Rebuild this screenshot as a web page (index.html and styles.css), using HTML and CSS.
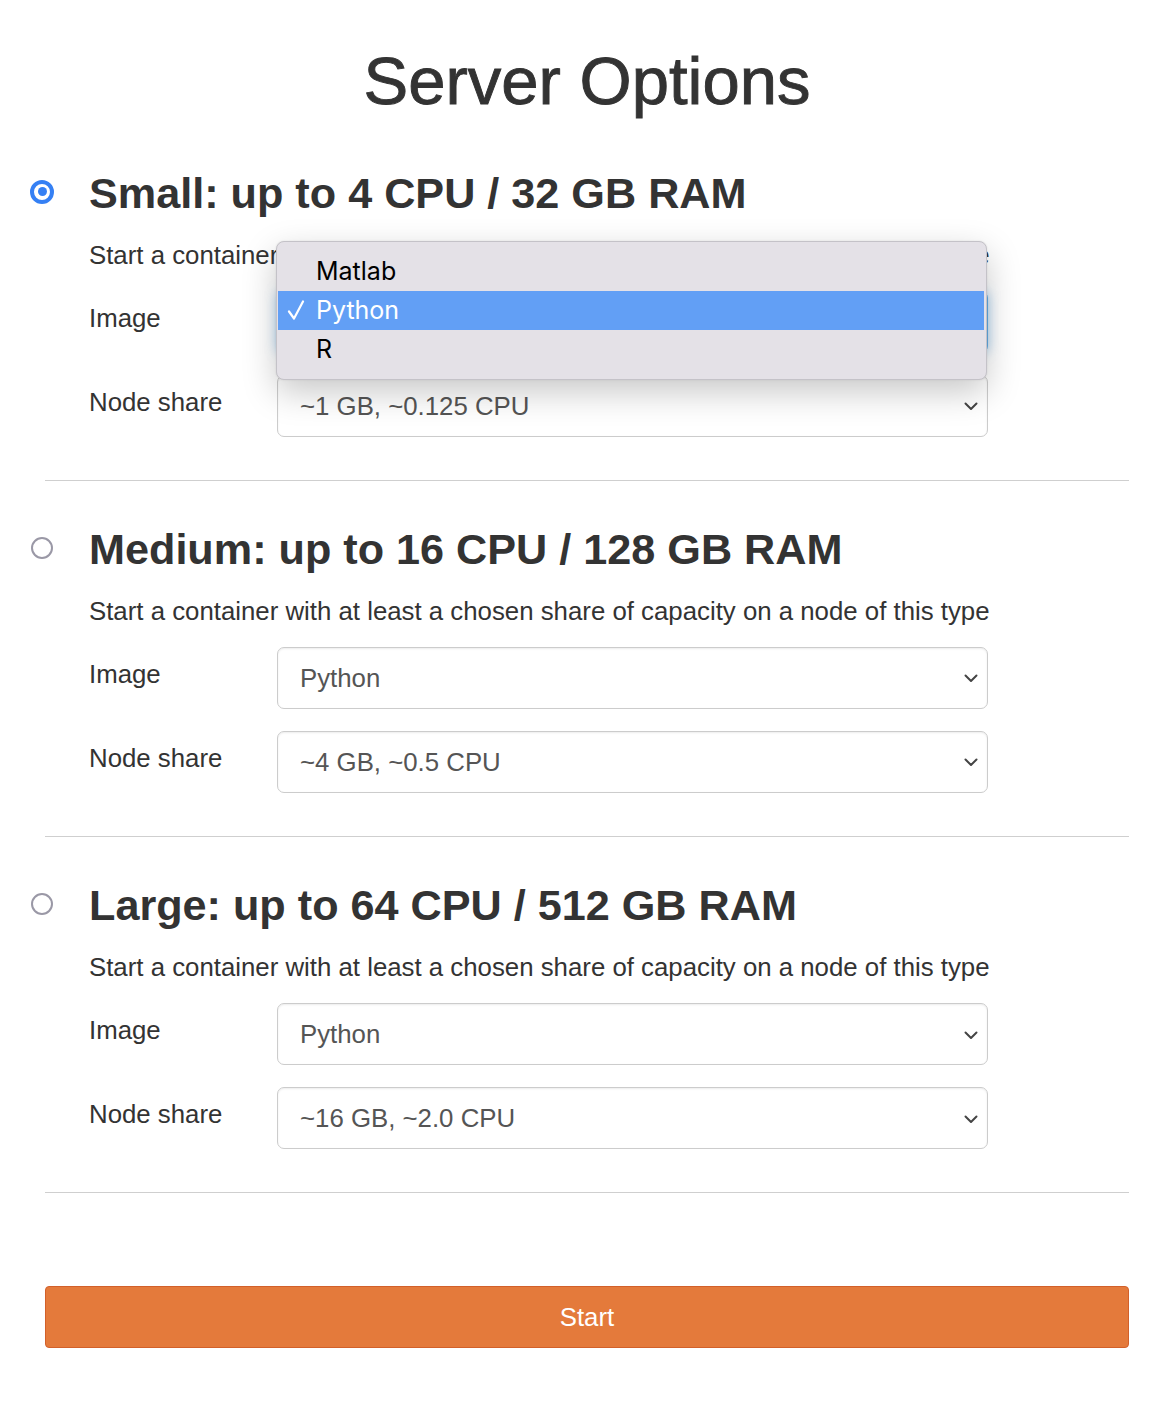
FILE: index.html
```html
<!DOCTYPE html>
<html lang="en">
<head>
<meta charset="utf-8">
<title>Server Options</title>
<link rel="stylesheet" href="styles.css">
</head>
<body>
<div class="page">
  <h1 class="title">Server Options</h1>

  <section class="option">
    <span class="radio checked"></span>
    <div class="option-body">
      <h3 class="option-title">Small: up to 4 CPU / 32 GB RAM</h3>
      <p class="desc">Start a container with at least a chosen share of capacity on a node of this type</p>
      <div class="field">
        <label class="label">Image</label>
        <div class="select-wrap">
          <div class="select focus"><span>Python</span><svg class="chev" width="14" height="9" viewBox="0 0 14 9"><path d="M1.5 1.5l5.5 5.5 5.5-5.5" fill="none" stroke="#444" stroke-width="2" stroke-linecap="round" stroke-linejoin="round"/></svg></div>
          <div class="menu">
            <div class="menu-item"><span class="check"></span>Matlab</div>
            <div class="menu-item active"><span class="check"><svg width="18" height="20" viewBox="0 0 18 20"><path d="M2 11.5l5 7L16 1.5" fill="none" stroke="#fff" stroke-width="2.2" stroke-linecap="round" stroke-linejoin="round"/></svg></span>Python</div>
            <div class="menu-item"><span class="check"></span>R</div>
          </div>
        </div>
      </div>
      <div class="field">
        <label class="label">Node share</label>
        <div class="select-wrap">
          <div class="select"><span>~1 GB, ~0.125 CPU</span><svg class="chev" width="14" height="9" viewBox="0 0 14 9"><path d="M1.5 1.5l5.5 5.5 5.5-5.5" fill="none" stroke="#444" stroke-width="2" stroke-linecap="round" stroke-linejoin="round"/></svg></div>
        </div>
      </div>
    </div>
  </section>
  <hr class="divider">

  <section class="option">
    <span class="radio"></span>
    <div class="option-body">
      <h3 class="option-title">Medium: up to 16 CPU / 128 GB RAM</h3>
      <p class="desc">Start a container with at least a chosen share of capacity on a node of this type</p>
      <div class="field">
        <label class="label">Image</label>
        <div class="select-wrap">
          <div class="select"><span>Python</span><svg class="chev" width="14" height="9" viewBox="0 0 14 9"><path d="M1.5 1.5l5.5 5.5 5.5-5.5" fill="none" stroke="#444" stroke-width="2" stroke-linecap="round" stroke-linejoin="round"/></svg></div>
        </div>
      </div>
      <div class="field">
        <label class="label">Node share</label>
        <div class="select-wrap">
          <div class="select"><span>~4 GB, ~0.5 CPU</span><svg class="chev" width="14" height="9" viewBox="0 0 14 9"><path d="M1.5 1.5l5.5 5.5 5.5-5.5" fill="none" stroke="#444" stroke-width="2" stroke-linecap="round" stroke-linejoin="round"/></svg></div>
        </div>
      </div>
    </div>
  </section>
  <hr class="divider">

  <section class="option">
    <span class="radio"></span>
    <div class="option-body">
      <h3 class="option-title">Large: up to 64 CPU / 512 GB RAM</h3>
      <p class="desc">Start a container with at least a chosen share of capacity on a node of this type</p>
      <div class="field">
        <label class="label">Image</label>
        <div class="select-wrap">
          <div class="select"><span>Python</span><svg class="chev" width="14" height="9" viewBox="0 0 14 9"><path d="M1.5 1.5l5.5 5.5 5.5-5.5" fill="none" stroke="#444" stroke-width="2" stroke-linecap="round" stroke-linejoin="round"/></svg></div>
        </div>
      </div>
      <div class="field">
        <label class="label">Node share</label>
        <div class="select-wrap">
          <div class="select"><span>~16 GB, ~2.0 CPU</span><svg class="chev" width="14" height="9" viewBox="0 0 14 9"><path d="M1.5 1.5l5.5 5.5 5.5-5.5" fill="none" stroke="#444" stroke-width="2" stroke-linecap="round" stroke-linejoin="round"/></svg></div>
        </div>
      </div>
    </div>
  </section>
  <hr class="divider">

  <button class="start-btn" type="button">Start</button>
</div>
</body>
</html>
```

FILE: styles.css
```css
html, body {
  margin: 0;
  padding: 0;
  background: #fff;
}

body {
  font-family: "Liberation Sans", Arial, sans-serif;
  color: #333;
  font-size: 25.8px;
  line-height: 1.42;
}

.page {
  padding: 0 43px 54px 30px;
}

.title {
  margin: 44px 0 0 15px;
  font-size: 67px;
  font-weight: normal;
  line-height: 1.1;
  text-align: center;
  -webkit-text-stroke: 0.9px #333;
}

.option {
  display: grid;
  grid-template-columns: 59px 1fr;
  align-items: start;
}

.title + .option {
  margin-top: 52px;
}

.divider + .option {
  margin-top: 45px;
}

.radio {
  box-sizing: border-box;
  width: 22px;
  height: 22px;
  margin: 11px 0 0 1px;
  border: 2px solid #9a98a6;
  border-radius: 50%;
  display: flex;
  align-items: center;
  justify-content: center;
  background: #fff;
}

.radio.checked {
  width: 24px;
  height: 24px;
  margin: 10px 0 0 0;
  border: 4px solid #3580f4;
}

.radio.checked::after {
  content: "";
  width: 9px;
  height: 9px;
  border-radius: 50%;
  background: #3580f4;
}

.option-body {
  min-width: 0;
}

.option-title {
  margin: 0;
  font-size: 43.2px;
  font-weight: bold;
  line-height: 1.1;
}

.desc {
  margin: 20px 0 0;
}

.field {
  display: grid;
  grid-template-columns: 188px 711px;
  margin-top: 22px;
}

.desc + .field {
  margin-top: 17px;
}

.label {
  padding-top: 9px;
}

.select-wrap {
  position: relative;
}

.select {
  box-sizing: border-box;
  height: 62px;
  border: 1px solid #cccccc;
  border-radius: 7px;
  box-shadow: inset 0 1px 2px rgba(0, 0, 0, 0.08);
  display: flex;
  align-items: center;
  justify-content: space-between;
  padding: 0 9px 0 22px;
  color: #555;
  background: #fff;
}

.select.focus {
  border-color: #66afe9;
  box-shadow: inset 0 1px 2px rgba(0, 0, 0, 0.08), 0 0 12px rgba(102, 175, 233, 0.6);
}

.chev {
  display: block;
  margin-top: 2px;
}

.menu {
  position: absolute;
  top: -50px;
  left: -1px;
  width: 711px;
  box-sizing: border-box;
  padding: 10px 2px 10px 1px;
  background: #e4e1e7;
  border: 1px solid #c4c2c8;
  border-radius: 8px;
  box-shadow: 0 12px 34px rgba(0, 0, 0, 0.22), 0 0 2px rgba(0, 0, 0, 0.1);
  z-index: 10;
  font-family: Inter, "Liberation Sans", sans-serif;
  font-size: 25px;
  color: #000;
}

.menu-item {
  display: flex;
  align-items: center;
  height: 39px;
  line-height: 39px;
}

.menu-item.active {
  background: #629ff5;
  color: #fff;
}

.check {
  box-sizing: border-box;
  width: 38px;
  height: 39px;
  padding-left: 9px;
  display: flex;
  align-items: center;
}

.check svg {
  display: block;
}

.divider {
  margin: 43px 0 0 15px;
  border: 0;
  border-top: 1px solid #cfcfcf;
  height: 0;
}

.start-btn {
  display: block;
  box-sizing: border-box;
  width: calc(100% - 15px);
  margin: 93px 0 0 15px;
  height: 62px;
  background: #e47a3b;
  border: 1px solid #d2602a;
  border-radius: 4px;
  color: #fff;
  font-family: "Liberation Sans", Arial, sans-serif;
  font-size: 25.8px;
  padding: 0;
}
```
